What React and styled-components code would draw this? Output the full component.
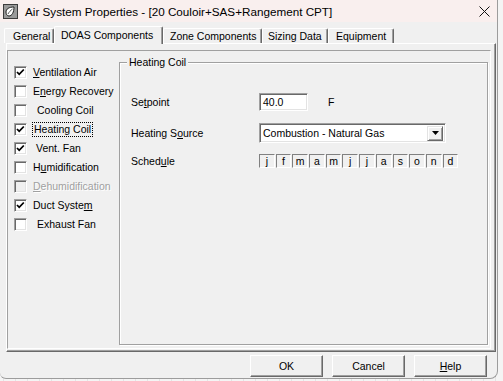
import React from "react";
import styled, { createGlobalStyle } from "styled-components";

const GlobalStyle = createGlobalStyle`
  html, body { margin: 0; padding: 0; }
  body {
    width: 503px; height: 381px; overflow: hidden;
    background: #f3f3f3;
    font-family: "Liberation Sans", Arial, sans-serif;
  }
`;

const Desktop = styled.div`
  width: 503px;
  height: 381px;
  background-color: #f4f4f4;
  background-image: repeating-linear-gradient(90deg, transparent 0 3px, #e4e4e4 3px 4px, transparent 4px 12px);
`;

const Window = styled.div`
  width: 498px;
  height: 379px;
  box-sizing: border-box;
  background: #f0f0f0;
  border-right: 1px solid #9c9c9c;
  border-bottom: 1px solid #9c9c9c;
  border-bottom-right-radius: 8px;
  border-bottom-left-radius: 6px;
  display: flex;
  flex-direction: column;
  overflow: hidden;
`;

const TitleBar = styled.div`
  height: 22px;
  flex: none;
  background: #f9efee;
  display: flex;
  align-items: center;
  padding-left: 3px;
`;

const TitleText = styled.span`
  margin-left: 7px;
  font-size: 11.7px;
  color: #000;
  white-space: nowrap;
`;

const CloseBox = styled.div`
  margin-left: auto;
  width: 26px;
  height: 22px;
  display: flex;
  align-items: center;
  justify-content: center;
`;

const Body = styled.div`
  flex: 1;
  display: flex;
  flex-direction: column;
  padding: 4px 0 0 4px;
  font-size: 10.5px;
  color: #000;
`;

const TabStrip = styled.div`
  display: flex;
  align-items: flex-end;
  height: 17px;
  position: relative;
  z-index: 2;
`;

const Tab = styled.div`
  width: ${(p) => p.$w}px;
  height: ${(p) => (p.$active ? 18 : 15)}px;
  margin-bottom: ${(p) => (p.$active ? -1 : 0)}px;
  box-sizing: border-box;
  background: #f0f0f0;
  border-top: 1px solid #fff;
  border-left: 1px solid #fff;
  border-right: 1px solid #696969;
  box-shadow: inset -1px 0 0 #a0a0a0;
  border-top-left-radius: 2px;
  border-top-right-radius: 2px;
  display: flex;
  align-items: center;
  padding-left: ${(p) => p.$pad}px;
  padding-bottom: ${(p) => (p.$active ? 2 : 0)}px;
  white-space: nowrap;
`;

const TabPage = styled.div`
  margin-left: 2px;
  width: 490px;
  height: 309px;
  box-sizing: border-box;
  border-top: 1px solid #fff;
  border-left: 1px solid #fff;
  border-right: 1px solid #696969;
  border-bottom: 1px solid #696969;
  box-shadow: inset -1px -1px 0 #a0a0a0;
  display: flex;
  flex-direction: column;
`;

const Panel = styled.div`
  flex: 1;
  margin: 6px 4px 2px 0;
  border-top: 1px solid #a0a0a0;
  border-left: 1px solid #a0a0a0;
  border-right: 1px solid #fff;
  border-bottom: 1px solid #fff;
  display: flex;
`;

const CheckList = styled.div`
  width: 111px;
  flex: none;
  padding-top: 12px;
  display: flex;
  flex-direction: column;
`;

const CheckRow = styled.div`
  height: 19px;
  display: flex;
  align-items: center;
  padding-left: 6px;
`;

const Box = styled.span`
  width: 13px;
  height: 13px;
  box-sizing: border-box;
  flex: none;
  background: ${(p) => (p.$disabled ? "#f0f0f0" : "#fff")};
  border-top: 1px solid #a0a0a0;
  border-left: 1px solid #a0a0a0;
  border-right: 1px solid #fff;
  border-bottom: 1px solid #fff;
  box-shadow: inset 1px 1px 0 #696969, inset -1px -1px 0 #e3e3e3;
  display: flex;
  align-items: center;
  justify-content: center;
`;

const CheckLabel = styled.span`
  margin-left: ${(p) => 6 + (p.$indent || 0)}px;
  white-space: nowrap;
  color: ${(p) => (p.$disabled ? "#a0a0a0" : "#000")};
  text-shadow: ${(p) => (p.$disabled ? "1px 1px 0 #fff" : "none")};
  outline: ${(p) => (p.$focus ? "1px dotted #000" : "none")};
  outline-offset: 0;
  padding: ${(p) => (p.$focus ? "0 1px" : "0")};
  margin-right: ${(p) => (p.$focus ? -2 : 0)}px;
  line-height: 13px;
`;

const U = styled.span`
  text-decoration: underline;
`;

const GroupBox = styled.div`
  flex: 1;
  position: relative;
  margin: 11px 2px 3px 0;
  border: 1px solid #a0a0a0;
  box-shadow: inset 1px 1px 0 #fff, 1px 1px 0 #fff;
  display: flex;
  flex-direction: column;
  padding: 29px 0 0 11px;
`;

const Legend = styled.span`
  position: absolute;
  top: -7px;
  left: 7px;
  padding: 0 2px;
  background: #f0f0f0;
  line-height: 13px;
`;

const FieldRow = styled.div`
  display: grid;
  grid-template-columns: 128px auto;
  align-items: center;
  height: 20px;
  margin-top: ${(p) => p.$gap || 0}px;
`;

const FieldLabel = styled.span`
  white-space: nowrap;
`;

const InputWrap = styled.div`
  display: flex;
  align-items: center;
`;

const sunken = `
  box-sizing: border-box;
  border-top: 1px solid #a0a0a0;
  border-left: 1px solid #a0a0a0;
  border-right: 1px solid #fff;
  border-bottom: 1px solid #fff;
  box-shadow: inset 1px 1px 0 #696969, inset -1px -1px 0 #e3e3e3;
`;

const TextBox = styled.div`
  ${sunken}
  width: 49px;
  height: 18px;
  background: #fff;
  padding: 2px 0 0 3px;
  line-height: 13px;
`;

const Unit = styled.span`
  margin-left: 20px;
`;

const Select = styled.div`
  ${sunken}
  width: 187px;
  height: 20px;
  background: #fff;
  display: flex;
  align-items: center;
  padding: 2px;
`;

const SelectText = styled.span`
  flex: 1;
  padding-left: 1px;
  white-space: nowrap;
`;

const ArrowBtn = styled.span`
  width: 16px;
  height: 15px;
  box-sizing: border-box;
  background: #f0f0f0;
  border-top: 1px solid #e3e3e3;
  border-left: 1px solid #e3e3e3;
  border-right: 1px solid #696969;
  border-bottom: 1px solid #696969;
  box-shadow: inset 1px 1px 0 #fff, inset -1px -1px 0 #a0a0a0;
  display: flex;
  align-items: center;
  justify-content: center;
`;

const Months = styled.div`
  display: flex;
  gap: 1px;
`;

const Month = styled.span`
  width: 15.7px;
  height: 14px;
  box-sizing: border-box;
  border-top: 1px solid #808080;
  border-left: 1px solid #808080;
  border-right: 1px solid #fff;
  border-bottom: 1px solid #fff;
  display: flex;
  align-items: center;
  justify-content: center;
  line-height: 12px;
  font-size: 10.5px;
`;

const ButtonBar = styled.div`
  flex: 1;
  display: flex;
  justify-content: flex-end;
  align-items: center;
  gap: 9px;
  padding-right: 10px;
  padding-top: 2px;
`;

const Button = styled.button`
  width: 73px;
  height: 22px;
  box-sizing: border-box;
  background: #f0f0f0;
  font-family: inherit;
  font-size: 10.5px;
  color: #000;
  border-top: 1px solid #fff;
  border-left: 1px solid #fff;
  border-right: 1px solid #696969;
  border-bottom: 1px solid #696969;
  box-shadow: inset -1px -1px 0 #a0a0a0;
  padding: 0;
`;

const AppIcon = () => (
  <svg width="15" height="15" viewBox="0 0 15 15">
    <rect x="0.5" y="0.5" width="14" height="14" fill="#9a9a9a" stroke="#3c3c3c" />
    <path d="M3 8 C3 5 6 3 11 3 C11 8 9 12 6 12 C4 12 3 10 3 8 Z" fill="#fff" stroke="#222" strokeWidth="1" />
    <path d="M5 10 C6 8 7.5 6.5 9.5 5" fill="none" stroke="#555" strokeWidth="1" />
  </svg>
);

const CloseIcon = () => (
  <svg width="11" height="11" viewBox="0 0 11 11">
    <path d="M0.5 0.5 L10.5 10.5 M10.5 0.5 L0.5 10.5" stroke="#111" strokeWidth="1" />
  </svg>
);

const Check = () => (
  <svg width="9" height="9" viewBox="0 0 9 9">
    <path d="M1 4 L3.2 6.3 L7.8 1.5" fill="none" stroke="#000" strokeWidth="1.8" />
  </svg>
);

const DownArrow = () => (
  <svg width="7" height="4" viewBox="0 0 7 4">
    <path d="M0 0 H7 L3.5 4 Z" fill="#000" />
  </svg>
);

const items = [
  { label: <><U>V</U>entilation Air</>, checked: true },
  { label: <>E<U>n</U>ergy Recovery</>, checked: false },
  { label: <>Cooling Coil</>, checked: false, indent: 4 },
  { label: <>Heating Coil</>, checked: true, focus: true },
  { label: <>Vent. Fan</>, checked: true, indent: 3 },
  { label: <>H<U>u</U>midification</>, checked: false },
  { label: <><U>D</U>ehumidification</>, checked: false, disabled: true },
  { label: <>Duct Syste<U>m</U></>, checked: true },
  { label: <>Exhaust Fan</>, checked: false, indent: 4 },
];

const tabs = [
  { name: "General", w: 50, pad: 8 },
  { name: "DOAS Components", w: 109, pad: 6, active: true },
  { name: "Zone Components", w: 99, pad: 6 },
  { name: "Sizing Data", w: 66, pad: 5 },
  { name: "Equipment", w: 66, pad: 7 },
];

const months = ["j", "f", "m", "a", "m", "j", "j", "a", "s", "o", "n", "d"];

export default function App() {
  return (
    <>
      <GlobalStyle />
      <Desktop>
        <Window>
          <TitleBar>
            <AppIcon />
            <TitleText>Air System Properties - [20 Couloir+SAS+Rangement CPT]</TitleText>
            <CloseBox>
              <CloseIcon />
            </CloseBox>
          </TitleBar>
          <Body>
            <TabStrip>
              {tabs.map((t) => (
                <Tab key={t.name} $w={t.w} $pad={t.pad} $active={t.active}>
                  {t.name}
                </Tab>
              ))}
            </TabStrip>
            <TabPage>
              <Panel>
                <CheckList>
                  {items.map((it, i) => (
                    <CheckRow key={i}>
                      <Box $disabled={it.disabled}>{it.checked && <Check />}</Box>
                      <CheckLabel $indent={it.indent} $disabled={it.disabled} $focus={it.focus}>
                        {it.label}
                      </CheckLabel>
                    </CheckRow>
                  ))}
                </CheckList>
                <GroupBox>
                  <Legend>Heating Coil</Legend>
                  <FieldRow>
                    <FieldLabel>Se<U>t</U>point</FieldLabel>
                    <InputWrap>
                      <TextBox>40.0</TextBox>
                      <Unit>F</Unit>
                    </InputWrap>
                  </FieldRow>
                  <FieldRow $gap={11}>
                    <FieldLabel>Heating S<U>o</U>urce</FieldLabel>
                    <Select>
                      <SelectText>Combustion - Natural Gas</SelectText>
                      <ArrowBtn>
                        <DownArrow />
                      </ArrowBtn>
                    </Select>
                  </FieldRow>
                  <FieldRow $gap={8}>
                    <FieldLabel>Sched<U>u</U>le</FieldLabel>
                    <Months>
                      {months.map((m, i) => (
                        <Month key={i}>{m}</Month>
                      ))}
                    </Months>
                  </FieldRow>
                </GroupBox>
              </Panel>
            </TabPage>
            <ButtonBar>
              <Button>OK</Button>
              <Button>Cancel</Button>
              <Button><U>H</U>elp</Button>
            </ButtonBar>
          </Body>
        </Window>
      </Desktop>
    </>
  );
}
